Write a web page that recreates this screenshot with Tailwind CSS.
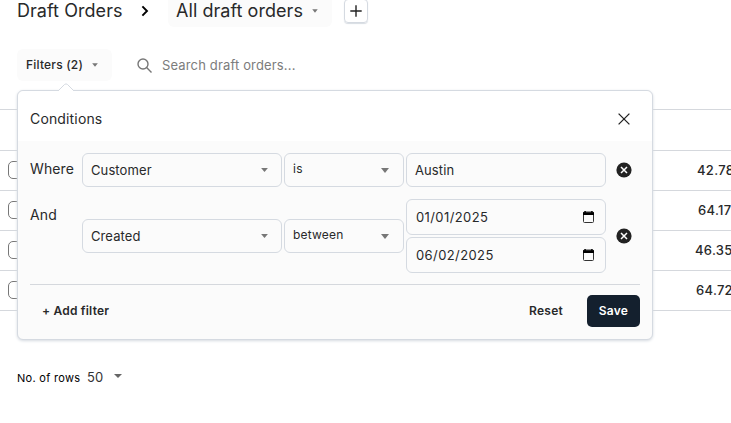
<!DOCTYPE html>
<html lang="en">
<head>
<meta charset="utf-8">
<title>Draft Orders</title>
<script src="https://cdn.jsdelivr.net/npm/@tailwindcss/browser@4"></script>
</head>
<body class="relative h-[423px] w-[731px] overflow-hidden bg-white font-['Inter',sans-serif] text-[#28292a]">
<header class="-mt-[5px] flex h-8 items-center pl-[17px]">
  <h1 class="-mt-px w-[105px] text-[18px] tracking-[0.05px] whitespace-nowrap">Draft Orders</h1>
  <svg class="ml-[19px] h-3 w-2 shrink-0" viewBox="0 0 8 12" fill="none" stroke="#000" stroke-width="1.9"><path d="M1.4 1.3 6 6 1.4 10.7"/></svg>
  <div class="ml-[19px] flex h-8 w-[164px] items-center rounded-md bg-[#fbfbfb] pl-2">
    <span class="-mt-px w-[127px] text-[18px] tracking-[0.05px] whitespace-nowrap">All draft orders</span>
    <svg class="ml-[9px] h-1 w-[6px]" viewBox="0 0 7 4" fill="#777"><path d="M.3 0h6.4L3.5 4z"/></svg>
  </div>
  <button class="ml-[12px] flex size-6 items-center justify-center rounded-[4px] border border-[#d5dae1] shadow-[0_1px_1px_#d8dde3]"><svg class="size-3 shrink-0" viewBox="0 0 12 12" stroke="#222" stroke-width="1.4"><path d="M6 .3v11.4M.3 6h11.4"/></svg></button>
</header>
<div class="mt-[22px] flex h-8 items-center pl-[17px]">
  <button class="flex h-8 w-[95px] items-center rounded-md bg-[#fbfbfb] pl-[9px] text-[12px] font-medium tracking-[0.2px]">
    <span class="w-[57px] text-left whitespace-nowrap">Filters (2)</span>
    <svg class="ml-[9px] h-1 w-[6px]" viewBox="0 0 7 4" fill="#777"><path d="M.2 0h6.6L3.5 4z"/></svg>
  </button>
  <svg class="ml-[25px] size-[15px]" viewBox="0 0 15 15" fill="none" stroke="#777" stroke-width="1.4"><circle cx="6" cy="6" r="5"/><path d="m9.6 9.6 4.9 4.9"/></svg>
  <span class="ml-[10px] pt-[2px] text-[13px] tracking-[0.15px] text-[#7c7c7c]">Search draft orders...</span>
</div>
<div class="mt-7 border-b border-[#d5d8dd] text-[13px] font-medium tracking-[0.3px]">
  <div class="h-[41px] border-t border-[#d5d8dd]"></div>
  <div class="flex h-10 items-center border-t border-[#d5d8dd]"><span class="-mt-px ml-2 size-[18px] shrink-0 rounded-[5px] border border-[#777]"></span><span class="ml-[671px] whitespace-nowrap">42.78</span></div>
  <div class="flex h-10 items-center border-t border-[#d5d8dd]"><span class="-mt-px ml-2 size-[18px] shrink-0 rounded-[5px] border border-[#777]"></span><span class="ml-[672px] whitespace-nowrap">64.17</span></div>
  <div class="flex h-10 items-center border-t border-[#d5d8dd]"><span class="-mt-px ml-2 size-[18px] shrink-0 rounded-[5px] border border-[#777]"></span><span class="ml-[669px] whitespace-nowrap">46.35</span></div>
  <div class="flex h-10 items-center border-t border-[#d5d8dd]"><span class="-mt-px ml-2 size-[18px] shrink-0 rounded-[5px] border border-[#777]"></span><span class="ml-[670px] whitespace-nowrap">64.72</span></div>
</div>
<footer class="mt-[57px] flex h-5 items-center pl-[17px] text-black">
  <span class="w-[63px] pt-px text-[11px] tracking-[0.3px] whitespace-nowrap">No. of rows</span>
  <span class="ml-[7px] w-[17px] text-[13px] text-[#333]">50</span>
  <svg class="-mt-1 ml-[10px] h-1 w-2" viewBox="0 0 8 4" fill="#666"><path d="M0 0h8L4 4z"/></svg>
</footer>

<section class="absolute top-[90px] left-[17px] h-[250px] w-[636px] rounded-md border border-[#d5dae1] bg-[#fbfbfb] shadow-[0_1px_3px_#d5dae1]">
  <svg class="absolute -top-[8px] left-[39px] h-[9px] w-[18px]" viewBox="0 0 18 9"><path d="M0 9 7.5 1.5Q9 0 10.5 1.5L18 9z" fill="#fff"/><path d="M1 8 7.5 1.5Q9 .2 10.5 1.5L17 8" fill="none" stroke="#d5dae1"/></svg>
  <div class="flex h-[50px] items-center justify-between rounded-t-md bg-white pr-[22px] pl-3 pt-[6px]">
    <h2 class="-mt-[2px] text-[14px] tracking-[0.15px]">Conditions</h2>
    <svg class="size-3" viewBox="0 0 12 12" stroke="#222" stroke-width="1.3"><path d="m.6.6 10.8 10.8M11.4.6.6 11.4"/></svg>
  </div>
  <div class="px-3 pt-3">
    <div class="flex h-[34px] text-[13px] tracking-[0.2px]">
      <span class="w-[52px] pt-[6px] text-[14px] leading-5 tracking-[0.1px]">Where</span>
      <div class="flex w-[200px] items-center justify-between rounded-md border border-[#d5dae1] pr-[13px] pl-2"><span class="pt-[2px] tracking-[0.1px]">Customer</span><svg class="h-1 w-[7px]" viewBox="0 0 7 4" fill="#777"><path d="M.1 0h6.8L3.5 4z"/></svg></div>
      <div class="ml-[2px] flex w-[120px] items-center justify-between rounded-md border border-[#d5dae1] pr-[14px] pl-2"><span class="-mt-[3px] text-[12px] tracking-[0.3px]">is</span><svg class="mt-px h-[5px] w-2" viewBox="0 0 8 5" fill="#777"><path d="M0 0h8L4 5z"/></svg></div>
      <div class="ml-[2px] flex w-[200px] items-center rounded-md border border-[#d5dae1] pt-[2px] pl-2 tracking-[0.1px]">Austin</div>
      <svg class="mt-[9px] ml-[10px] size-4" viewBox="0 0 16 16"><circle cx="8" cy="8" r="7.6" fill="#222"/><path d="m5 5 6 6m0-6-6 6" stroke="#fff" stroke-width="1.5"/></svg>
    </div>
    <div class="mt-3 flex h-[74px] items-center text-[13px] tracking-[0.2px]">
      <span class="w-[52px] self-start pt-[6px] text-[14px] leading-5 tracking-[0.1px]">And</span>
      <div class="flex h-[34px] w-[200px] items-center justify-between rounded-md border border-[#d5dae1] pr-[13px] pl-2"><span class="pt-[2px] tracking-[0.1px]">Created</span><svg class="h-1 w-[7px]" viewBox="0 0 7 4" fill="#777"><path d="M.1 0h6.8L3.5 4z"/></svg></div>
      <div class="ml-[2px] flex h-[34px] w-[120px] items-center justify-between rounded-md border border-[#d5dae1] pr-[14px] pl-2"><span class="-mt-[3px] text-[12px] tracking-[0.2px]">between</span><svg class="mt-px h-[5px] w-2" viewBox="0 0 8 5" fill="#777"><path d="M0 0h8L4 5z"/></svg></div>
      <div class="ml-[2px] flex w-[200px] flex-col gap-[2px] tracking-[0.4px]">
        <div class="flex h-9 items-center justify-between rounded-md border border-[#d5dae1] pr-[11px] pl-[9px]"><span class="pt-[2px]">01/01/2025</span><svg class="h-3 w-[11px]" viewBox="0 0 11 12"><path d="M1.5 1h8q1 0 1 1v8.5q0 1-1 1h-8q-1 0-1-1V2q0-1 1-1z" fill="none" stroke="#333"/><path d="M0 1.2h1.4V0h1.4v1.2h5.4V0h1.4v1.2H11V4H0z" fill="#000"/></svg></div>
        <div class="flex h-9 items-center justify-between rounded-md border border-[#d5dae1] pr-[11px] pl-[9px]"><span class="pt-[2px]">06/02/2025</span><svg class="h-3 w-[11px]" viewBox="0 0 11 12"><path d="M1.5 1h8q1 0 1 1v8.5q0 1-1 1h-8q-1 0-1-1V2q0-1 1-1z" fill="none" stroke="#333"/><path d="M0 1.2h1.4V0h1.4v1.2h5.4V0h1.4v1.2H11V4H0z" fill="#000"/></svg></div>
      </div>
      <svg class="ml-[10px] size-4" viewBox="0 0 16 16"><circle cx="8" cy="8" r="7.6" fill="#222"/><path d="m5 5 6 6m0-6-6 6" stroke="#fff" stroke-width="1.5"/></svg>
    </div>
    <div class="mt-[11px] flex items-center border-t border-[#d5d8dd] pt-[10px] text-[12px] font-semibold tracking-[0.25px]">
      <button class="ml-3 tracking-[0.2px]">+ Add filter</button>
      <button class="mr-6 ml-auto">Reset</button>
      <button class="h-8 w-[53px] rounded-[5px] bg-[#14202e] text-white">Save</button>
    </div>
  </div>
</section>
</body>
</html>
